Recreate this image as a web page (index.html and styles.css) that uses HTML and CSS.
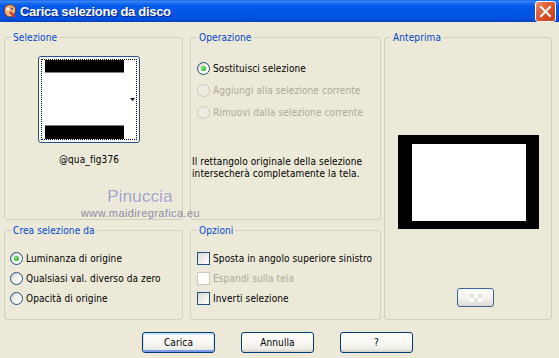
FILE: index.html
```html
<!DOCTYPE html>
<html lang="it">
<head>
<meta charset="utf-8">
<title>Carica selezione da disco</title>
<link rel="stylesheet" href="styles.css">
</head>
<body>
<div class="window">
  <div class="titlebar">
    <svg class="app-icon" viewBox="0 0 16 16" width="16" height="16">
      <path d="M3 4 C5 1 11 1 13 4 C15 8 12 13 8 14 C4 14 1 9 3 4Z" fill="#F4B07C" stroke="#7A3A12" stroke-width="1"/>
      <circle cx="6" cy="6" r="1.5" fill="#fff"/>
      <circle cx="10" cy="5.5" r="1" fill="#3A2A8A"/>
      <path d="M8 9 L13 14" stroke="#D8321E" stroke-width="2"/>
    </svg>
    <span class="title">Carica selezione da disco</span>
    <div class="close">
      <svg viewBox="0 0 19 19" width="19" height="19">
        <path d="M5 5 L14 14 M14 5 L5 14" stroke="#fff" stroke-width="2" stroke-linecap="square"/>
      </svg>
    </div>
  </div>

  <div class="groups">
    <fieldset class="group g-sel">
      <legend>Selezione</legend>
      <div class="sel-body">
        <div class="thumb">
          <div class="focus">
            <div class="sel-img">
              <div class="band band-top"></div>
              <div class="band-white"></div>
              <div class="band band-bottom"></div>
            </div>
            <div class="sel-arrow">
              <svg viewBox="0 0 5 3" width="5" height="3"><path d="M0 0 H5 L2.5 3Z" fill="#000"/></svg>
            </div>
          </div>
        </div>
        <div class="sel-name">@qua_fig376</div>
      </div>
    </fieldset>

    <fieldset class="group g-op">
      <legend>Operazione</legend>
      <div class="opt-list op-list">
        <div class="opt-row"><span class="radio on"></span><span>Sostituisci selezione</span></div>
        <div class="opt-row"><span class="radio dis"></span><span class="dis-text">Aggiungi alla selezione corrente</span></div>
        <div class="opt-row"><span class="radio dis"></span><span class="dis-text">Rimuovi dalla selezione corrente</span></div>
      </div>
      <div class="op-info">Il rettangolo originale della selezione<br>intersecherà completamente la tela.</div>
    </fieldset>

    <fieldset class="group g-prev">
      <legend>Anteprima</legend>
      <div class="prev-body">
        <div class="prev-canvas"><div class="prev-white"></div></div>
        <div class="prev-btn"><span class="checker"></span></div>
      </div>
    </fieldset>

    <fieldset class="group g-crea">
      <legend>Crea selezione da</legend>
      <div class="opt-list small-list crea-list">
        <div class="opt-row"><span class="radio on"></span><span>Luminanza di origine</span></div>
        <div class="opt-row"><span class="radio"></span><span>Qualsiasi val. diverso da zero</span></div>
        <div class="opt-row"><span class="radio"></span><span>Opacità di origine</span></div>
      </div>
    </fieldset>

    <fieldset class="group g-opt">
      <legend>Opzioni</legend>
      <div class="opt-list small-list opz-list">
        <div class="opt-row"><span class="check"></span><span>Sposta in angolo superiore sinistro</span></div>
        <div class="opt-row"><span class="check dis"></span><span class="dis-text">Espandi sulla tela</span></div>
        <div class="opt-row"><span class="check"></span><span>Inverti selezione</span></div>
      </div>
    </fieldset>
  </div>

  <div class="buttons">
    <button class="btn default">Carica</button>
    <button class="btn">Annulla</button>
    <button class="btn">?</button>
  </div>

  <div class="watermark">
    <div class="wm-name">Pinuccia</div>
    <div class="wm-url">www.maidiregrafica.eu</div>
  </div>
</div>
</body>
</html>
```

FILE: styles.css
```css
* { box-sizing: border-box; }
html, body { margin: 0; padding: 0; }
body {
  width: 559px;
  height: 358px;
  overflow: hidden;
  background: #ECE9D8;
  font-family: "DejaVu Sans Condensed", "Liberation Sans", Arial, sans-serif;
  font-stretch: condensed;
  font-size: 10px;
  letter-spacing: 0.1px;
  color: #000;
}
.window {
  position: relative;
  width: 559px;
  height: 358px;
  background: #ECE9D8;
}

/* title bar */
.titlebar {
  height: 22px;
  display: flex;
  align-items: center;
  background: linear-gradient(180deg, #0A54E3 0px, #3C8DF6 1px, #1E6FF0 3px, #0359E9 6px, #0055E5 12px, #0054E3 16px, #004FDC 19px, #0042C4 22px);
}
.app-icon { flex: none; margin-left: 2px; }
.title {
  margin-left: 2px;
  color: #fff;
  font-family: "Liberation Sans", Arial, sans-serif;
  font-stretch: normal;
  font-weight: bold;
  font-size: 13px;
  letter-spacing: -0.3px;
  text-shadow: 1px 1px 0 #0A1E8C;
}
.close {
  align-self: flex-start;
  margin: 1px 3px 0 auto;
  width: 21px;
  height: 21px;
  border: 1px solid #fff;
  border-radius: 3px;
  background: linear-gradient(135deg, #F0987A 0%, #E2643E 30%, #D64A22 70%, #C53F18 100%);
  display: flex;
  align-items: center;
  justify-content: center;
}

/* groups */
.groups {
  display: grid;
  grid-template-columns: 179px 7px 191px 3px 168px;
  grid-template-rows: 189px 96px;
  row-gap: 4px;
  padding: 9px 0 0 4px;
}
.group {
  margin: 0;
  padding: 0;
  min-width: 0;
  border: 1px solid #D0D0BF;
  border-radius: 3px;
}
.group legend {
  margin-left: 6px;
  padding: 0 2px;
  color: #0046D5;
  line-height: 13px;
}
.g-sel { grid-column: 1; grid-row: 1; }
.g-op { grid-column: 3; grid-row: 1; }
.g-prev { grid-column: 5; grid-row: 1 / span 2; }
.g-crea { grid-column: 1; grid-row: 2; }
.g-opt { grid-column: 3; grid-row: 2; }

/* selezione */
.sel-body {
  display: flex;
  flex-direction: column;
  align-items: center;
  width: 102px;
  margin: 12px 0 0 33px;
}
.thumb {
  width: 102px;
  height: 87px;
  border: 1px solid #24508C;
  border-radius: 3px;
  background: #fff;
  padding: 2px;
}
.focus {
  height: 100%;
  border: 1px dotted #000;
  display: flex;
  padding-left: 3px;
}
.sel-img {
  width: 79px;
  display: flex;
  flex-direction: column;
}
.band { background: #000; }
.band-top { height: 13px; border-bottom: 1px solid #808080; }
.band-white { flex: 1; background: #fff; }
.band-bottom { height: 14px; border-top: 1px solid #808080; }
.sel-arrow {
  flex: 1;
  display: flex;
  align-items: center;
  justify-content: flex-end;
  padding-right: 1px;
}
.sel-name { margin-top: 10px; line-height: 13px; }

/* option lists */
.opt-list { display: flex; flex-direction: column; }
.opt-row {
  height: 22px;
  display: flex;
  align-items: center;
  gap: 3px;
  white-space: nowrap;
}
.op-list { margin: 13px 0 0 6px; }
.small-list .opt-row { height: 20px; }
.crea-list { margin: 11px 0 0 5px; }
.opz-list { margin: 11px 0 0 6px; }
.op-info { margin: 33px 0 0 1px; line-height: 12px; white-space: nowrap; }
.dis-text { color: #ACA899; }

.radio {
  flex: none;
  width: 13px;
  height: 13px;
  border-radius: 50%;
  border: 1px solid #1C5180;
  background: linear-gradient(135deg, #D6D5CC 0%, #F4F3EE 50%, #FFFFFF 100%);
  display: flex;
  align-items: center;
  justify-content: center;
}
.radio.on::after {
  content: "";
  width: 5px;
  height: 5px;
  border-radius: 50%;
  background: radial-gradient(circle at 40% 40%, #9BE89B 0%, #3CC03C 50%, #1E9A1E 100%);
}
.radio.dis {
  border-color: #CAC8BB;
  background: #EEECE2;
}
.check {
  flex: none;
  width: 13px;
  height: 13px;
  border: 1px solid #1C5180;
  background: linear-gradient(135deg, #D6D5CC 0%, #F2F1EC 55%, #FFFFFF 100%);
}
.check.dis {
  border-color: #CAC8BB;
  background: #fff;
}

/* anteprima */
.prev-body {
  display: flex;
  flex-direction: column;
  align-items: center;
}
.prev-canvas {
  margin-top: 91px;
  width: 141px;
  height: 94px;
  background: #000;
  padding: 9px 13px 8px 14px;
}
.prev-white { width: 100%; height: 100%; background: #fff; }
.prev-btn {
  margin: 59px 0 0 15px;
  width: 37px;
  height: 19px;
  border: 1px solid #3A669E;
  border-radius: 3px;
  background: linear-gradient(180deg, #FFFFFF 0%, #F2F1EC 60%, #DAD8CE 100%);
  display: flex;
  align-items: center;
  justify-content: center;
}
.checker {
  width: 12px;
  height: 8px;
  background: conic-gradient(#FFFFFF 25%, #E2E1DA 0 50%, #FFFFFF 0 75%, #E2E1DA 0) 0 0 / 8px 8px;
}

/* buttons */
.buttons {
  display: flex;
  gap: 26px;
  padding-left: 142px;
  margin-top: 12px;
}
.btn {
  width: 73px;
  height: 21px;
  margin: 0;
  padding: 0;
  border: 1px solid #003C74;
  border-radius: 3px;
  background: linear-gradient(180deg, #FFFFFF 0%, #F7F6F2 55%, #ECEBE6 85%, #D6D0C5 100%);
  font: inherit;
  letter-spacing: inherit;
  color: #000;
  display: flex;
  align-items: center;
  justify-content: center;
}
.btn.default {
  box-shadow: inset 0 1px 0 1px #CEE7FF, inset 0 -1px 0 1px #7D9BEA;
}

/* watermark overlay */
.watermark {
  position: absolute;
  left: 76px;
  top: 188px;
  width: 124px;
  display: flex;
  flex-direction: column;
  align-items: flex-end;
  pointer-events: none;
  font-family: "Liberation Sans", Arial, sans-serif;
  font-stretch: normal;
}
.wm-name {
  margin-right: 27px;
  font-size: 17px;
  line-height: 17px;
  letter-spacing: 0.2px;
  color: #A3A3C2;
  text-shadow: 1px 1px 0 #F6F6FA;
}
.wm-url {
  margin-top: 3px;
  font-size: 11px;
  line-height: 11px;
  letter-spacing: 0.4px;
  color: #8C8CAA;
}
```
